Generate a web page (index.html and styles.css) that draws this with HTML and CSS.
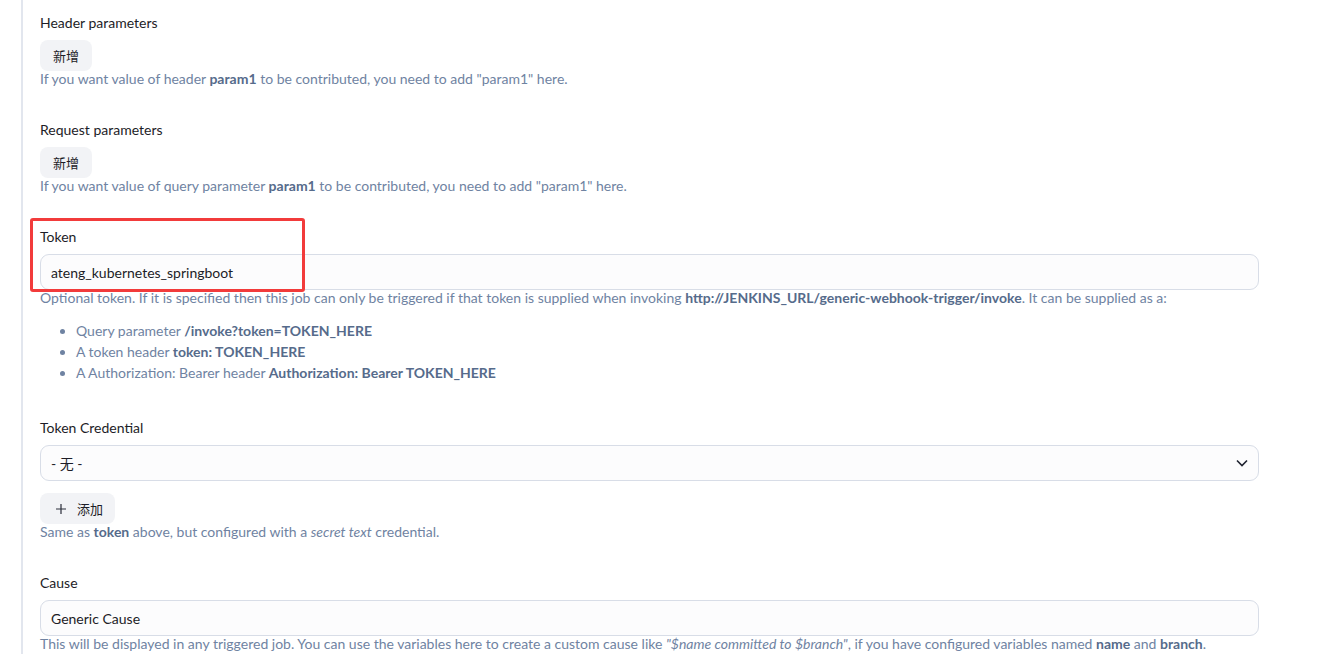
FILE: index.html
```html
<!DOCTYPE html>
<html lang="en">
<head>
    <meta charset="UTF-8">
    <meta name="viewport" content="width=device-width, initial-scale=1.0">
    <title>Generic Webhook Trigger</title>
    <link rel="stylesheet" href="styles.css">
</head>
<body>
    <div class="config">
        <div class="field">
            <div class="field-label">Header parameters</div>
            <button class="btn">新增</button>
            <div class="help">If you want value of header <b>param1</b> to be contributed, you need to add "param1" here.</div>
        </div>

        <div class="field">
            <div class="field-label">Request parameters</div>
            <button class="btn">新增</button>
            <div class="help">If you want value of query parameter <b>param1</b> to be contributed, you need to add "param1" here.</div>
        </div>

        <div class="field field-marked">
            <div class="field-label">Token</div>
            <input class="text-input" type="text" value="ateng_kubernetes_springboot">
            <div class="help">
                Optional token. If it is specified then this job can only be triggered if that token is supplied when invoking <b>http://JENKINS_URL/generic-webhook-trigger/invoke</b>. It can be supplied as a:
                <ul>
                    <li>Query parameter <b>/invoke?token=TOKEN_HERE</b></li>
                    <li>A token header <b>token: TOKEN_HERE</b></li>
                    <li>A Authorization: Bearer header <b>Authorization: Bearer TOKEN_HERE</b></li>
                </ul>
            </div>
            <div class="mark"></div>
        </div>

        <div class="field">
            <div class="field-label">Token Credential</div>
            <div class="select">
                <span>- 无 -</span>
                <svg width="12" height="8" viewBox="0 0 12 8"><path d="M1 1.5 6 6.5 11 1.5" fill="none" stroke="#1f2330" stroke-width="1.6"/></svg>
            </div>
            <button class="btn btn-add">
                <svg width="12" height="12" viewBox="0 0 12 12"><path d="M6 1v10M1 6h10" stroke="#2a2e3a" stroke-width="1.2"/></svg>
                添加
            </button>
            <div class="help">Same as <b>token</b> above, but configured with a <i>secret text</i> credential.</div>
        </div>

        <div class="field">
            <div class="field-label">Cause</div>
            <input class="text-input" type="text" value="Generic Cause">
            <div class="help">This will be displayed in any triggered job. You can use the variables here to create a custom cause like <i>"$name committed to $branch"</i>, if you have configured variables named <b>name</b> and <b>branch</b>.</div>
        </div>
    </div>
</body>
</html>
```

FILE: styles.css
```css
body {
    margin: 0;
    background-color: white;
    font-family: Lato, "Noto Sans CJK SC", sans-serif;
    font-size: 14px;
    color: #1d1d27;
    overflow: hidden;
}
.config {
    margin: 0 72px 0 21px;
    padding: 14px 0 0 17px;
    border-left: 2px solid #e2e6ee;
    min-height: 700px;
}
.field {
    margin-bottom: 34px;
}
.field-label {
    line-height: 18px;
    margin-bottom: 8px;
}
.btn {
    display: flex;
    align-items: center;
    gap: 10px;
    height: 31px;
    padding: 0 13px;
    border: none;
    border-radius: 8px;
    background-color: #f2f3f6;
    font-family: inherit;
    font-size: 13px;
    color: #1d1d27;
}
.btn-add {
    margin-top: 12px;
    padding: 0 12px 0 15px;
}
.text-input,
.select {
    display: block;
    box-sizing: border-box;
    width: 100%;
    height: 36px;
    padding: 0 10px;
    border: 1px solid #d8dde7;
    border-radius: 9px;
    background-color: #fcfcfd;
    font-family: inherit;
    font-size: 14px;
    color: #1d1d27;
}
.select {
    display: flex;
    align-items: center;
    justify-content: space-between;
    padding-right: 10px;
}
.help {
    line-height: 16px;
    color: #6f83a2;
}
.help b {
    color: #566b8b;
}
.help ul {
    margin: 14px 0 0;
    padding: 0 0 2px 36px;
    line-height: 21px;
}
.field-marked {
    position: relative;
}
.mark {
    position: absolute;
    top: -10px;
    left: -10px;
    width: 275px;
    height: 74px;
    box-sizing: border-box;
    border: 3px solid #f23b3b;
    border-radius: 3px;
}
```
